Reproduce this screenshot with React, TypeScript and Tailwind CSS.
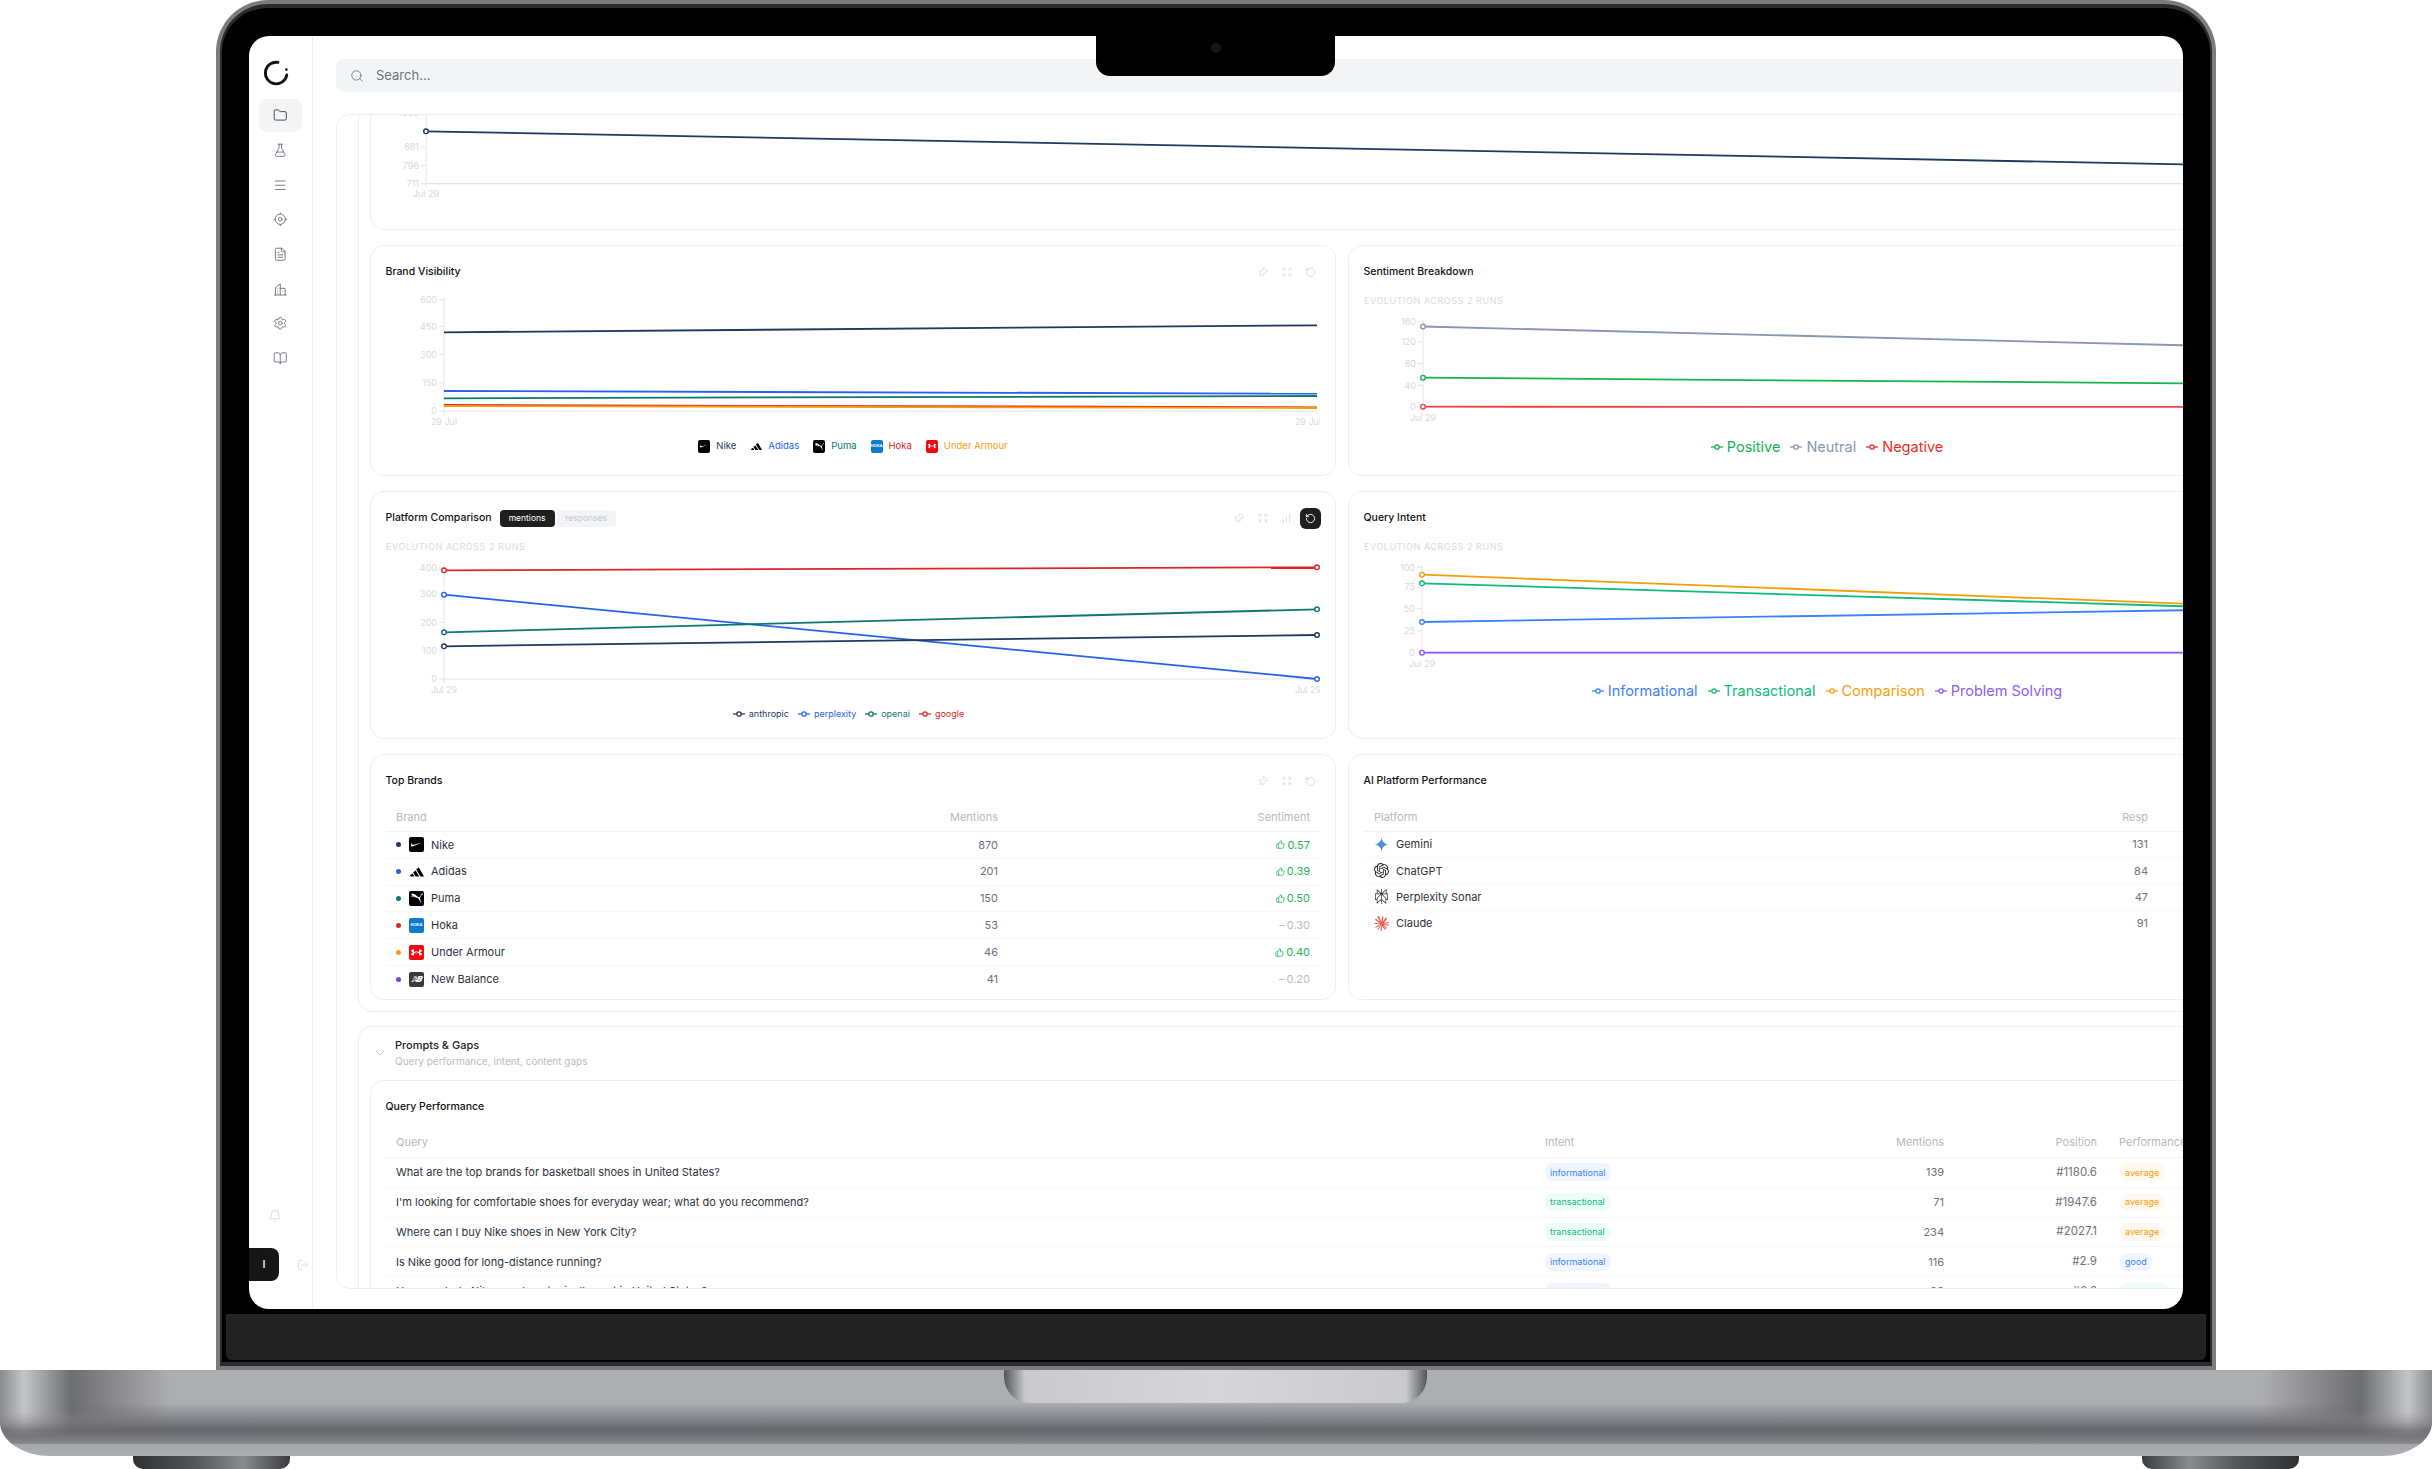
import React from "react";
import {
  Search, Folder, FlaskConical, Menu, FileText, Settings, BookOpen,
  Bell, LogOut, Pin, Expand, RotateCcw, ChartNoAxesColumnIncreasing, ThumbsUp, ChevronDown,
} from "lucide-react";
import {
  SiNike, SiAdidas, SiPuma, SiUnderarmour, SiNewbalance, SiOpenai, SiPerplexity, SiClaude, SiGooglegemini,
} from "react-icons/si";

const NAVY = "#1e3a5f", BLUE = "#2563eb", TEAL = "#0f766e", RED = "#dc2626", ORANGE = "#f59e0b";
const GREEN = "#16b350", SLATE = "#8a96ad", SKY = "#3b82f6", EMER = "#10b981", PURPLE = "#8b5cf6";

type Line = { c: string; a: [number, number]; b: [number, number]; dots?: "left" | "both" | "none" };
type Tick = { label: string; y: number };

function Chart({ x0, y0, w, h, axisX, top, bottom, right, ticks, lines, xLabels, tickEnd }: {
  x0: number; y0: number; w: number; h: number; axisX: number; top: number; bottom: number; right: number;
  ticks: Tick[]; lines: Line[]; xLabels: { x: number; label: string; y: number }[]; tickEnd?: boolean;
}) {
  return (
    <svg width={w} height={h} viewBox={`${x0} ${y0} ${w} ${h}`} className="block shrink-0 overflow-hidden">
      <line x1={axisX} y1={top} x2={axisX} y2={bottom + 4} stroke="#e2e4ea" strokeWidth="1" />
      <line x1={axisX} y1={bottom} x2={right} y2={bottom} stroke="#e2e4ea" strokeWidth="1.2" />
      {tickEnd && <line x1={right} y1={bottom} x2={right} y2={bottom + 4} stroke="#e2e4ea" />}
      {ticks.map((t) => (
        <g key={t.label}>
          <line x1={axisX - 5} y1={t.y} x2={axisX} y2={t.y} stroke="#e2e4ea" />
          <text x={axisX - 7} y={t.y + 3.2} textAnchor="end" className="text-[9px] fill-[#d6d8de]">{t.label}</text>
        </g>
      ))}
      {xLabels.map((l) => (
        <text key={l.x} x={l.x} y={l.y} textAnchor="middle" className="text-[9px] fill-[#d6d8de]">{l.label}</text>
      ))}
      {lines.map((l, i) => (
        <g key={i}>
          <line x1={l.a[0]} y1={l.a[1]} x2={l.b[0]} y2={l.b[1]} stroke={l.c} strokeWidth="1.8" />
          {l.dots !== "none" && <circle cx={l.a[0]} cy={l.a[1]} r="2.3" fill="#fff" stroke={l.c} strokeWidth="1.4" />}
          {l.dots === "both" && <circle cx={l.b[0]} cy={l.b[1]} r="2.3" fill="#fff" stroke={l.c} strokeWidth="1.4" />}
        </g>
      ))}
    </svg>
  );
}

function Marker({ c }: { c: string }) {
  return (
    <svg width="12" height="8" viewBox="0 0 12 8" className="shrink-0">
      <line x1="0" y1="4" x2="12" y2="4" stroke={c} strokeWidth="1.3" />
      <circle cx="6" cy="4" r="2.2" fill="#fff" stroke={c} strokeWidth="1.3" />
    </svg>
  );
}

function BigLegend({ items }: { items: [string, string][] }) {
  return (
    <div className="mt-[5px] flex h-[20px] items-center justify-center gap-[10px] text-[14.5px] leading-[20px]">
      {items.map(([t, c]) => (
        <span key={t} className="flex items-center gap-[4px]" style={{ color: c }}>
          <Marker c={c} />{t}
        </span>
      ))}
    </div>
  );
}

function HeadIcons({ chart, dark }: { chart?: boolean; dark?: boolean }) {
  const cls = "flex h-[21px] w-[21px] items-center justify-center text-[#d8dae0]";
  return (
    <div className="-mr-px ml-auto flex items-center gap-[3px]">
      <span className={cls}><Pin size={11} className="rotate-45" /></span>
      <span className={cls}><Expand size={10} /></span>
      {chart && <span className={cls}><ChartNoAxesColumnIncreasing size={11} /></span>}
      {dark ? (
        <span className="flex h-[21px] w-[21px] items-center justify-center rounded-[6px] bg-[#1f1f1f] text-white"><RotateCcw size={11} /></span>
      ) : (
        <span className={cls}><RotateCcw size={11} /></span>
      )}
    </div>
  );
}

function Card({ w, h, title, extra, icons, children }: {
  w: string; h: string; title: string; extra?: React.ReactNode; icons?: React.ReactNode; children: React.ReactNode;
}) {
  return (
    <div className={`${w} ${h} shrink-0 overflow-hidden rounded-[14px] border border-[#eceef2] bg-white px-[15px] pt-[16px]`}>
      <div className="flex h-[18px] items-center pt-[2px]">
        <span className="-ml-[0.5px] text-[10.5px] font-medium text-[#111]">{title}</span>
        {extra}
        {icons}
      </div>
      {children}
    </div>
  );
}

function Sub() {
  return <div className="mt-[15px] h-[11px] text-[9px] uppercase leading-[11px] tracking-[0.55px] text-[#d8dade]">Evolution across 2 runs</div>;
}

function Logo({ name, w = 15, h = 15 }: { name: string; w?: number; h?: number }) {
  const box = "flex shrink-0 items-center justify-center rounded-[2px]";
  const st = { width: w, height: h };
  if (name === "Nike") return <span className={`${box} bg-black text-white`} style={st}><SiNike size={w - 4} /></span>;
  if (name === "Adidas") return <span className={`${box} text-black`} style={st}><SiAdidas size={w - 1} /></span>;
  if (name === "Puma") return <span className={`${box} bg-black text-white`} style={st}><SiPuma size={w - 3} /></span>;
  if (name === "Hoka") return <span className={`${box} bg-[#0a7ccb] text-[4px] font-bold italic leading-none text-white`} style={st}>HOKA</span>;
  if (name === "Under Armour") return <span className={`${box} bg-[#ee0a0f] text-white`} style={st}><SiUnderarmour size={w - 4} /></span>;
  return <span className={`${box} bg-[#3a3a3c] text-white`} style={st}><SiNewbalance size={w - 3} /></span>;
}

const brands: [string, string, string, string, boolean][] = [
  ["Nike", NAVY, "870", "0.57", true],
  ["Adidas", BLUE, "201", "0.39", true],
  ["Puma", TEAL, "150", "0.50", true],
  ["Hoka", RED, "53", "0.30", false],
  ["Under Armour", ORANGE, "46", "0.40", true],
  ["New Balance", "#7c3aed", "41", "0.20", false],
];

const platforms: [string, string, React.ReactNode][] = [
  ["Gemini", "131", <SiGooglegemini size={15} className="text-[#4a8fd8]" />],
  ["ChatGPT", "84", <SiOpenai size={15} className="text-[#222]" />],
  ["Perplexity Sonar", "47", <SiPerplexity size={15} className="text-[#333]" />],
  ["Claude", "91", <SiClaude size={15} className="text-[#e8635a]" />],
];

const pillCls: Record<string, string> = {
  informational: "bg-[#eff6ff] text-[#3b82f6]",
  transactional: "bg-[#ecfdf5] text-[#10b981]",
  average: "bg-[#fff8ec] text-[#f59e0b]",
  good: "bg-[#eff6ff] text-[#3b82f6]",
  excellent: "bg-[#ecfdf5] text-[#10b981]",
};

function Pill({ t }: { t: string }) {
  return <span className={`inline-flex h-[18px] items-center rounded-[8px] px-[5px] text-[9px] ${pillCls[t]}`}>{t}</span>;
}

const queries: [string, string, string, string, string][] = [
  ["What are the top brands for basketball shoes in United States?", "informational", "139", "#1180.6", "average"],
  ["I'm looking for comfortable shoes for everyday wear; what do you recommend?", "transactional", "71", "#1947.6", "average"],
  ["Where can I buy Nike shoes in New York City?", "transactional", "234", "#2027.1", "average"],
  ["Is Nike good for long-distance running?", "informational", "116", "#2.9", "good"],
  ["How much do Nike sneakers typically cost in United States?", "informational", "99", "#0.6", "excellent"],
];

function CityIcon({ size = 14 }: { size?: number }) {
  return (
    <svg width={size} height={size} viewBox="0 0 24 24" fill="none" stroke="currentColor" strokeWidth="1.5" strokeLinecap="round" strokeLinejoin="round">
      <path d="M2 21.5h20" />
      <path d="M4 21.5V9.5l8-6.5v18.5" />
      <path d="M12 10.5h8v11" />
      <path d="M8 11h.01M8 15h.01M8 18.5h.01M16 15h.01" />
    </svg>
  );
}

function TargetIcon({ size = 14 }: { size?: number }) {
  return (
    <svg width={size} height={size} viewBox="0 0 24 24" fill="none" stroke="currentColor" strokeWidth="1.5" strokeLinecap="round">
      <circle cx="12" cy="12" r="8.5" />
      <circle cx="12" cy="12" r="3" />
      <path d="M12 1.5v2M12 20.5v2M1.5 12h2M20.5 12h2" />
    </svg>
  );
}

const navIcons = [Folder, FlaskConical, Menu, TargetIcon, FileText, CityIcon, Settings, BookOpen];

function Sidebar() {
  return (
    <aside className="flex h-full w-[64px] shrink-0 flex-col border-r border-[#eceef2] pb-[28px] pt-[24px]">
      <svg width="26" height="26" viewBox="0 0 26 26" className="ml-[14px] shrink-0">
        <path d="M15 2.4 A 10.8 10.8 0 1 0 23.8 15" fill="none" stroke="#111" strokeWidth="2.8" strokeLinecap="round" />
        <circle cx="23.4" cy="9.6" r="1.3" fill="#111" />
      </svg>
      <nav className="mt-[13px] flex flex-col items-center gap-[1.7px]">
        {navIcons.map((I, i) => (
          <span key={i} className={`flex h-[33px] w-[43px] items-center justify-center rounded-[8px] ${i === 0 ? "bg-[#f3f4f6] text-[#374151]" : "text-[#6b7280]"}`}>
            <I size={14.5} strokeWidth={1.5} />
          </span>
        ))}
      </nav>
      <div className="mt-auto pl-[19px] text-[#d1d5db]"><Bell size={14} strokeWidth={1.5} /></div>
      <div className="mt-[25px] flex items-center">
        <span className="flex h-[33px] w-[30px] items-center justify-center rounded-r-[8px] bg-[#161616] text-[11px] font-medium text-white">I</span>
        <LogOut size={12} strokeWidth={1.5} className="ml-[18px] text-[#d1d5db]" />
      </div>
    </aside>
  );
}

function Dashboard() {
  return (
    <main className="flex h-full min-w-0 flex-1 flex-col overflow-hidden pl-[23px] pt-[23px]">
      <div className="flex h-[33px] w-[2000px] shrink-0 items-center rounded-[8px] bg-[#f3f4f6] pl-[14px]">
        <Search size={14} strokeWidth={1.5} className="text-[#6b7280]" />
        <span className="ml-[12px] text-[13px] text-[#6b7280]">Search...</span>
      </div>
      <div className="mt-[22px] h-[1175px] w-[2012px] shrink-0 overflow-hidden rounded-[14px] border border-[#eceef2] pl-[21px]">
        <div className="-mt-[81px] flex flex-col gap-[14px]">
          <section className="w-[1960px] rounded-[14px] border border-[#eceef2] p-[11px]">
            <div className="flex flex-col gap-[15px]">
              <div className="h-[184px] w-[1936px] overflow-hidden rounded-[14px] border border-[#eceef2] px-[15px]">
                <Chart x0={386} y0={47} w={1904} h={182} axisX={426} top={47} bottom={183.7} right={2290}
                  ticks={[{ label: "1000", y: 113 }, { label: "881", y: 147 }, { label: "796", y: 165.3 }, { label: "711", y: 183.7 }]}
                  xLabels={[{ x: 426, label: "Jul 29", y: 197 }]}
                  lines={[{ c: NAVY, a: [426, 131.3], b: [2290, 166.3] }]} />
              </div>
              <div className="flex gap-[12px]">
                <Card w="w-[966px]" h="h-[231px]" title="Brand Visibility" icons={<HeadIcons />}>
                  <div className="mt-[5px]">
                    <Chart x0={386} y0={285} w={934} h={150} axisX={444} top={297} bottom={411} right={1317} tickEnd
                      ticks={[{ label: "600", y: 299.7 }, { label: "450", y: 326.5 }, { label: "300", y: 354.5 }, { label: "150", y: 383 }, { label: "0", y: 411 }]}
                      xLabels={[{ x: 444, label: "29 Jul", y: 425 }, { x: 1308, label: "29 Jul", y: 425 }]}
                      lines={[
                        { c: NAVY, a: [444, 332.3], b: [1317, 325.3], dots: "none" },
                        { c: BLUE, a: [444, 391], b: [1317, 393.7], dots: "none" },
                        { c: TEAL, a: [444, 398.3], b: [1317, 396], dots: "none" },
                        { c: RED, a: [444, 405], b: [1317, 407.3], dots: "none" },
                        { c: ORANGE, a: [444, 406], b: [1317, 408], dots: "none" },
                      ]} />
                  </div>
                  <div className="mt-[4px] flex h-[14px] items-center justify-center gap-[14px] text-[9.5px]">
                    {([["Nike", NAVY], ["Adidas", BLUE], ["Puma", TEAL], ["Hoka", RED], ["Under Armour", ORANGE]] as [string, string][]).map(([n, c]) => (
                      <span key={n} className="flex items-center gap-[6px]" style={{ color: c }}>
                        <Logo name={n} w={12} h={13} />{n}
                      </span>
                    ))}
                  </div>
                </Card>
                <Card w="w-[958px]" h="h-[231px]" title="Sentiment Breakdown">
                  <Sub />
                  <div className="mt-[2px]">
                    <Chart x0={1364} y0={308} w={926} h={124} axisX={1423} top={319} bottom={407} right={2290}
                      ticks={[{ label: "160", y: 321.7 }, { label: "120", y: 341.7 }, { label: "80", y: 363.5 }, { label: "40", y: 385.3 }, { label: "0", y: 407 }]}
                      xLabels={[{ x: 1423, label: "Jul 29", y: 421 }]}
                      lines={[
                        { c: SLATE, a: [1423, 326.5], b: [2290, 347.9] },
                        { c: GREEN, a: [1423, 377.7], b: [2290, 384.1] },
                        { c: "#ef4444", a: [1423, 406.7], b: [2290, 407] },
                      ]} />
                  </div>
                  <BigLegend items={[["Positive", GREEN], ["Neutral", SLATE], ["Negative", "#ef2b2b"]]} />
                </Card>
              </div>
              <div className="flex gap-[12px]">
                <Card w="w-[966px]" h="h-[248px]" title="Platform Comparison"
                  extra={
                    <span className="ml-[8px] flex items-center gap-[2px] text-[8.5px]">
                      <span className="flex h-[17px] w-[55px] items-center justify-center rounded-[4px] bg-[#1f1f1f] text-white">mentions</span>
                      <span className="flex h-[17px] w-[59px] items-center justify-center rounded-[4px] bg-[#f3f4f6] text-[#c5c9d0]">responses</span>
                    </span>
                  }
                  icons={<HeadIcons chart dark />}>
                  <Sub />
                  <div className="mt-[2px]">
                    <Chart x0={386} y0={554} w={934} h={146} axisX={444} top={565} bottom={679} right={1317}
                      ticks={[{ label: "400", y: 567.3 }, { label: "300", y: 593.7 }, { label: "200", y: 622.3 }, { label: "100", y: 650.7 }, { label: "0", y: 679 }]}
                      xLabels={[{ x: 444, label: "Jul 29", y: 693 }, { x: 1308, label: "Jul 29", y: 693 }]}
                      lines={[
                        { c: RED, a: [444, 570.3], b: [1317, 567.3], dots: "both" },
                        { c: BLUE, a: [444, 594.7], b: [1317, 679], dots: "both" },
                        { c: TEAL, a: [444, 632.3], b: [1317, 609.3], dots: "both" },
                        { c: NAVY, a: [444, 646.3], b: [1317, 635], dots: "both" },
                      ]} />
                  </div>
                  <div className="mt-[7px] flex h-[14px] items-center justify-center gap-[9px] pr-[9px] text-[9px]">
                    {([["anthropic", NAVY], ["perplexity", BLUE], ["openai", TEAL], ["google", RED]] as [string, string][]).map(([n, c]) => (
                      <span key={n} className="flex items-center gap-[4px]" style={{ color: c }}><Marker c={c} />{n}</span>
                    ))}
                  </div>
                </Card>
                <Card w="w-[958px]" h="h-[248px]" title="Query Intent">
                  <Sub />
                  <div className="mt-[2px]">
                    <Chart x0={1364} y0={554} w={926} h={122} axisX={1422} top={565} bottom={653} right={2290}
                      ticks={[{ label: "100", y: 567.3 }, { label: "75", y: 587 }, { label: "50", y: 608.7 }, { label: "25", y: 630.7 }, { label: "0", y: 652.7 }]}
                      xLabels={[{ x: 1422, label: "Jul 29", y: 667 }]}
                      lines={[
                        { c: ORANGE, a: [1422, 574.7], b: [2290, 607.8] },
                        { c: EMER, a: [1422, 583.3], b: [2290, 609.5] },
                        { c: SKY, a: [1422, 622], b: [2290, 608.6] },
                        { c: PURPLE, a: [1422, 652.7], b: [2290, 652.7] },
                      ]} />
                  </div>
                  <BigLegend items={[["Informational", SKY], ["Transactional", EMER], ["Comparison", ORANGE], ["Problem Solving", PURPLE]]} />
                </Card>
              </div>
              <div className="flex gap-[12px]">
                <Card w="w-[966px]" h="h-[246px]" title="Top Brands" icons={<HeadIcons />}>
                  <div className="mt-[14px] flex h-[29px] items-center border-b-[1.5px] border-[#f0f1f4] px-[10px] text-[11px] text-[#b4b9c2]">
                    <span className="flex-1">Brand</span>
                    <span>Mentions</span>
                    <span className="w-[312px] text-right">Sentiment</span>
                  </div>
                  {brands.map(([n, c, m, s, up]) => (
                    <div key={n} className="flex h-[26.8px] items-center border-b border-[#f6f7f9] px-[10px] text-[11px] last:border-b-0">
                      <span className="mr-[8px] h-[5px] w-[5px] rounded-full" style={{ backgroundColor: c }} />
                      <Logo name={n} />
                      <span className="ml-[7px] flex-1 text-[#2d3340]">{n}</span>
                      <span className="text-[#6b7280]">{m}</span>
                      <span className={`flex w-[312px] items-center justify-end gap-[2px] ${up ? "text-[#22b45c]" : "text-[#b6bbc4]"}`}>
                        {up ? <ThumbsUp size={9} /> : <span>–</span>}{s}
                      </span>
                    </div>
                  ))}
                </Card>
                <Card w="w-[958px]" h="h-[246px]" title="AI Platform Performance">
                  <div className="mt-[14px] flex h-[29px] items-center justify-between border-b-[1.5px] border-[#f0f1f4] pl-[10px] pr-[142px] text-[11px] text-[#b4b9c2]">
                    <span>Platform</span>
                    <span>Resp</span>
                  </div>
                  {platforms.map(([n, v, ic]) => (
                    <div key={n} className="flex h-[26.2px] items-center border-b border-[#f6f7f9] pl-[10px] pr-[142px] text-[11px] last:border-b-0">
                      {ic}
                      <span className="ml-[7px] flex-1 text-[#2d3340]">{n}</span>
                      <span className="text-[#6b7280]">{v}</span>
                    </div>
                  ))}
                </Card>
              </div>
            </div>
          </section>
          <section className="w-[1960px] rounded-[14px] border border-[#eceef2] px-[11px]">
            <div className="flex h-[53px] items-start">
              <ChevronDown size={16} strokeWidth={1} className="ml-[2px] mt-[18px] text-[#a8adb7]" />
              <div className="ml-[7px] pt-[10px]">
                <div className="h-[16px] text-[11px] font-medium leading-[16px] text-[#222]">Prompts &amp; Gaps</div>
                <div className="h-[16px] text-[10px] leading-[16px] text-[#b9bdc6]">Query performance, intent, content gaps</div>
              </div>
            </div>
            <Card w="w-[1936px]" h="h-[300px]" title="Query Performance">
              <div className="mt-[12px] flex h-[31px] items-center border-b-[1.5px] border-[#f0f1f4] pl-[10px] text-[11px] text-[#b4b9c2]">
                <span className="w-[1149px]">Query</span>
                <span className="w-[289px]">Intent</span>
                <span className="w-[110px] text-right">Mentions</span>
                <span className="w-[153px] text-right">Position</span>
                <span className="pl-[22px]">Performance</span>
              </div>
              {queries.map(([q, i, m, p, f]) => (
                <div key={q} className="flex h-[29.8px] items-center border-b border-[#f6f7f9] pl-[10px] text-[11px]">
                  <span className="w-[1149px] text-[#2d3340]">{q}</span>
                  <span className="w-[289px]"><Pill t={i} /></span>
                  <span className="w-[110px] text-right text-[#6b7280]">{m}</span>
                  <span className="w-[153px] text-right text-[11.5px] text-[#6b7280]">{p}</span>
                  <span className="pl-[23px]"><Pill t={f} /></span>
                </div>
              ))}
            </Card>
          </section>
        </div>
      </div>
    </main>
  );
}

export default function App() {
  return (
    <div className="flex h-[1469px] w-[2432px] flex-col items-center overflow-hidden bg-white font-[Inter,sans-serif]">
      <div className="h-[1370px] w-[2000px] shrink-0 rounded-t-[52px] bg-[#7c7c7e] px-[4px] pt-[4px] pb-[4px]">
        <div className="relative flex h-full flex-col rounded-t-[48px] border-x-[2px] border-y-[4px] border-[#2b2b2b] bg-black">
          <div className="absolute left-[874px] top-[28px] z-10 flex h-[40px] w-[239px] items-start justify-center rounded-b-[14px] bg-black pt-[7px]">
            <span className="h-[10px] w-[10px] rounded-full bg-[#14161c]" />
          </div>
          <div className="px-[27px] pt-[28px]">
            <div className="flex h-[1273px] overflow-hidden rounded-[20px] bg-white">
              <Sidebar />
              <Dashboard />
            </div>
          </div>
          <div className="mx-[4px] mt-[5px] h-[46px] rounded-b-[6px] bg-[#232323]" />
        </div>
      </div>
      <div className="relative h-[86px] w-full shrink-0 overflow-hidden rounded-bl-[50px_34px] rounded-br-[50px_34px] bg-[linear-gradient(to_bottom,#adaeb2_0%,#adaeb2_38%,#8f9095_52%,#65666b_70%,#86878b_85%,#a6a7ab_87%,#adaeb2_100%)]">
        <div className="absolute left-0 top-0 h-[68px] w-[170px] bg-[linear-gradient(to_right,#8a8b8f_0%,#c4c5c9_14%,#6c6d72_42%,rgba(173,174,178,0)_100%)] [mask-image:linear-gradient(to_bottom,black_60%,transparent)]" />
        <div className="absolute right-0 top-0 h-[68px] w-[170px] bg-[linear-gradient(to_left,#8a8b8f_0%,#c4c5c9_14%,#6c6d72_42%,rgba(173,174,178,0)_100%)] [mask-image:linear-gradient(to_bottom,black_60%,transparent)]" />
        <div className="absolute left-[1004px] top-0 h-[33px] w-[423px] rounded-b-[26px] bg-[linear-gradient(to_right,#55565a_0%,#9a9b9f_3%,#c9cacd_5%,#d6d6da_50%,#c9cacd_95%,#9a9b9f_97%,#55565a_100%)]" />
      </div>
      <div className="flex h-[13px] w-full shrink-0 justify-between px-[133px]">
        <div className="h-full w-[157px] rounded-b-[10px] bg-[linear-gradient(to_right,#2f3033,#55565a_40%,#8a8b8f_70%,#3a3b3e)]" />
        <div className="h-full w-[157px] rounded-b-[10px] bg-[linear-gradient(to_right,#3a3b3e,#8a8b8f_30%,#55565a_60%,#2f3033)]" />
      </div>
    </div>
  );
}
